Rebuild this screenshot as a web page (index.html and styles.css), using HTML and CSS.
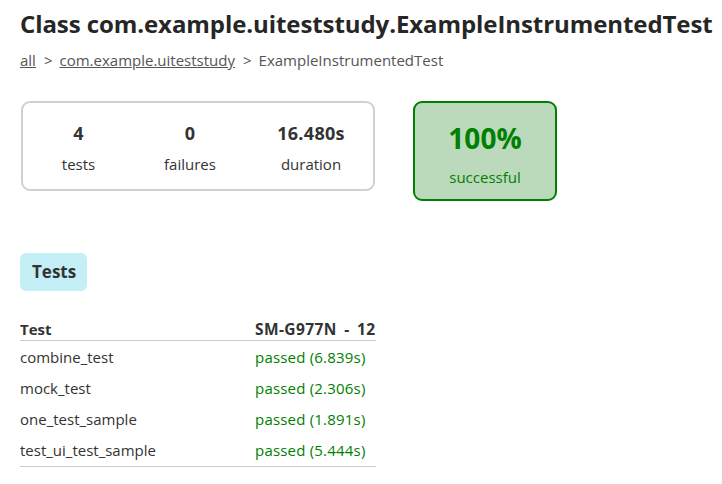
FILE: index.html
```html
<!DOCTYPE html>
<html>
<head>
<meta charset="utf-8">
<link rel="stylesheet" href="styles.css">
</head>
<body>
<div class="content">
  <h1 class="title">Class com.example.uiteststudy.ExampleInstrumentedTest</h1>
  <div class="breadcrumbs"><a href="#">all</a><span class="sep">&gt;</span><a href="#">com.example.uiteststudy</a><span class="sep">&gt;</span>ExampleInstrumentedTest</div>
  <div class="summary">
    <div class="summary-box">
      <div class="counter c1"><div class="num">4</div><div class="label">tests</div></div>
      <div class="counter c2"><div class="num">0</div><div class="label">failures</div></div>
      <div class="counter c3"><div class="num">16.480s</div><div class="label">duration</div></div>
    </div>
    <div class="success-box">
      <div class="percent">100%</div>
      <div class="label">successful</div>
    </div>
  </div>
  <div class="tabs"><span class="tab">Tests</span></div>
  <table class="results">
    <thead><tr><th>Test</th><th class="device">SM-G977N - 12</th></tr></thead>
    <tbody>
      <tr><td>combine_test</td><td class="passed">passed (6.839s)</td></tr>
      <tr><td>mock_test</td><td class="passed">passed (2.306s)</td></tr>
      <tr><td>one_test_sample</td><td class="passed">passed (1.891s)</td></tr>
      <tr><td>test_ui_test_sample</td><td class="passed">passed (5.444s)</td></tr>
    </tbody>
  </table>
</div>
</body>
</html>
```
FILE: styles.css
```css
html, body { margin: 0; padding: 0; background: #fff; }
body {
  font-family: "Open Sans", "Noto Sans", "Noto Sans CJK KR", sans-serif;
  color: #333;
  font-size: 15px;
}
.content { padding: 6px 20px 0 20px; }
.title {
  margin: 0;
  font-size: 24px;
  font-weight: 700;
  line-height: 36px;
  white-space: nowrap;
  color: #262626;
  letter-spacing: -0.08px;
}
.breadcrumbs {
  margin-top: 8px;
  font-size: 15px;
  line-height: 20px;
  color: #555;
}
.breadcrumbs a { color: #555; text-decoration: underline; }
.breadcrumbs .sep { padding: 0 7px 0 8px; }
.summary {
  display: flex;
  align-items: flex-start;
  gap: 38px;
  margin-top: 31px;
}
.summary-box {
  box-sizing: border-box;
  width: 354px;
  height: 90px;
  margin-left: 1px;
  border: 2px solid #d0d0d0;
  border-radius: 9px;
  display: flex;
  padding: 16px 0 0 0;
}
.counter { text-align: center; flex-shrink: 0; }
.c1 { width: 111px; }
.c2 { width: 112px; }
.c3 { width: 130px; }
.counter .num { font-size: 18px; font-weight: 700; line-height: 28px; }
.c3 .num { letter-spacing: 0.3px; }
.counter .label { font-size: 15px; line-height: 22px; margin-top: 6px; color: #333; }
.success-box {
  box-sizing: border-box;
  width: 144px;
  height: 100px;
  border: 2px solid #008000;
  border-radius: 9px;
  background: #bbd9bb;
  color: #008000;
  text-align: center;
  padding-top: 16px;
}
.success-box .percent { font-size: 28px; font-weight: 700; line-height: 38px; }
.success-box .label { font-size: 15px; line-height: 22px; margin-top: 9px; }
.tabs { margin-top: 52px; }
.tab {
  display: inline-block;
  background: #c5eff7;
  border-radius: 6px;
  padding: 0 11px 0 12px;
  height: 38px;
  line-height: 38px;
  font-size: 17px;
  font-weight: 700;
}
.results {
  margin-top: 27px;
  border-collapse: collapse;
  width: 356px;
  font-size: 15px;
}
.results th {
  text-align: left;
  font-weight: 700;
  padding: 0;
  line-height: 22px;
  border-bottom: 1px solid #ccc;
}
.results th.device { letter-spacing: 0.4px; word-spacing: 3px; font-size: 15.5px; }
.results td { padding: 0; height: 31px; line-height: 31px; }
.results tbody tr:first-child td { height: 32px; }
.results tbody tr:last-child td { border-bottom: 1px solid #ccc; height: 30px; }
.results th:first-child, .results td:first-child { width: 235px; }
.passed { color: #008000; letter-spacing: 0.2px; }
```
